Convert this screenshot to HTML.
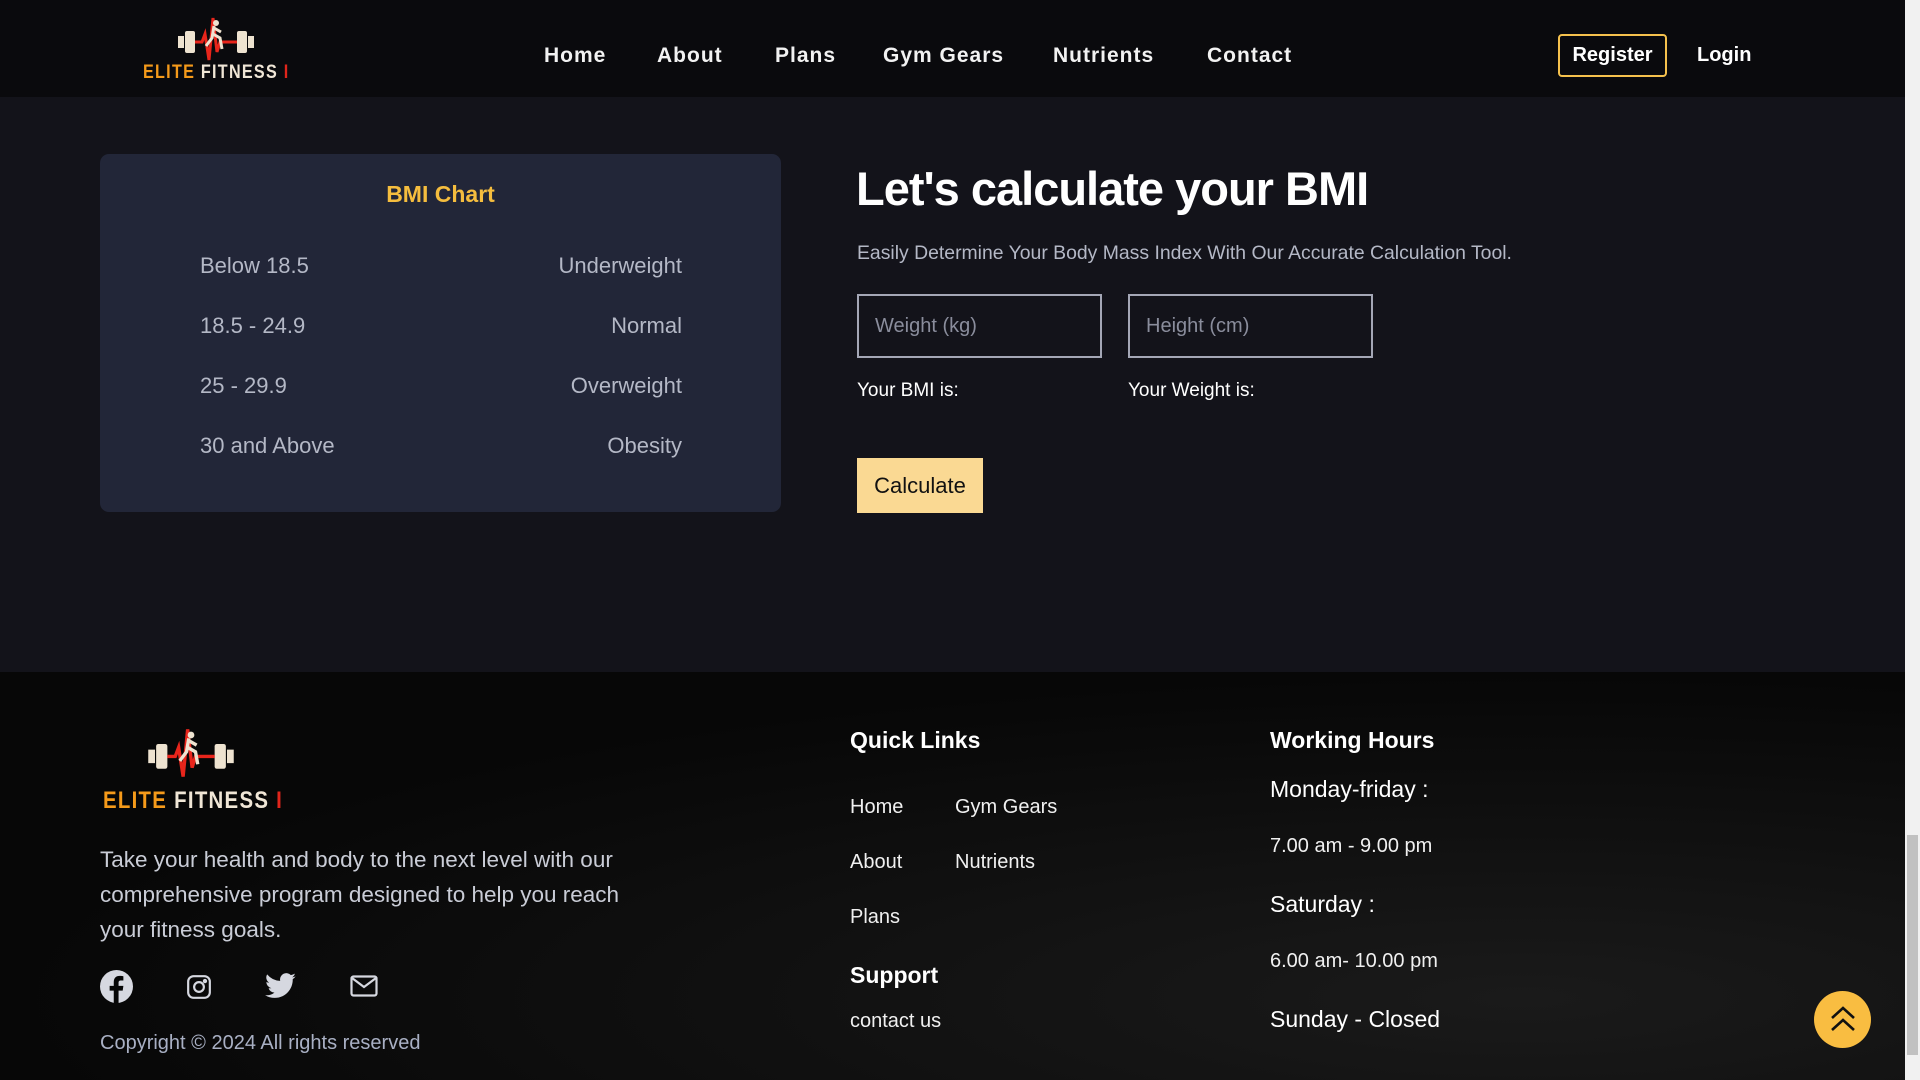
<!DOCTYPE html>
<html><head><meta charset="utf-8"><style>
*{margin:0;padding:0;box-sizing:border-box}
body{width:1920px;height:1080px;overflow:hidden;background:#13131a;font-family:"Liberation Sans",sans-serif;color:#fff;position:relative}
.a{position:absolute;white-space:nowrap}
nav{position:absolute;left:0;top:0;width:1905px;height:97px;background:#0a0a0d}
.nl{font-size:21px;font-weight:bold;letter-spacing:1px;top:44px;color:#f2f2f2}
.card{position:absolute;left:100px;top:154px;width:681px;height:358px;background:#222638;border-radius:9px}
.row{font-size:22px;color:#b4b8c6}
input{position:absolute;background:transparent;border:2px solid #a4a7b6;width:245px;height:64px;top:294px;font-size:20px;color:#8a8d9c;padding-left:16px;font-family:"Liberation Sans",sans-serif}
footer{position:absolute;left:0;top:672px;width:1905px;height:408px;background:radial-gradient(ellipse at 80% 80%,#1a1a1a,#070707 70%)}
.fl{font-size:20px;color:#f0f0f0}
.fh{font-size:23px;font-weight:bold}
.sb{position:absolute;right:0;top:0;width:15px;height:1080px;background:#f1f1f1}
.logo{font-weight:bold;letter-spacing:1.5px;transform:scaleX(.85);transform-origin:left}
</style></head><body>
<nav>
<svg class="a" style="left:176px;top:16px" width="80" height="46" viewBox="0 0 80 46"><rect x="2" y="20" width="6" height="12" fill="#eee3d0"/><rect x="9" y="15" width="10" height="22" rx="2" fill="#eee3d0"/><rect x="61" y="15" width="10" height="22" rx="2" fill="#eee3d0"/><rect x="72" y="20" width="6" height="12" fill="#eee3d0"/><polyline points="19,26 26,26 29,18 33,44 37,2 41,36 44,26 61,26" fill="none" stroke="#e8251b" stroke-width="3"/><circle cx="40" cy="7" r="3" fill="#eee3d0"/><path d="M38 10 L36 22 L30 30 M37 18 L44 22 L46 33 M38 12 L45 16" stroke="#eee3d0" stroke-width="3" fill="none"/></svg>
<div class="a logo" style="left:143px;top:62px;font-size:19px"><span style="color:#f59a1a">ELITE</span> <span style="color:#f0e6d6">FITNESS</span> <span style="color:#e0251b">I</span></div>
<div class="a nl" style="left:544px">Home</div>
<div class="a nl" style="left:657px">About</div>
<div class="a nl" style="left:775px">Plans</div>
<div class="a nl" style="left:883px">Gym Gears</div>
<div class="a nl" style="left:1053px">Nutrients</div>
<div class="a nl" style="left:1207px">Contact</div>
<div class="a" style="left:1558px;top:34px;width:109px;height:43px;border:2px solid #f5c14d;border-radius:4px;text-align:center;line-height:39px;font-size:20px;font-weight:bold">Register</div>
<div class="a" style="left:1697px;top:44px;font-size:20px;font-weight:bold">Login</div>
</nav>
<div class="card">
<div class="a" style="left:0;width:681px;text-align:center;top:27px;font-size:23px;font-weight:bold;color:#f5bd3e">BMI Chart</div>
<div class="a row" style="left:100px;top:99px">Below 18.5</div><div class="a row" style="right:99px;top:99px">Underweight</div>
<div class="a row" style="left:100px;top:159px">18.5 - 24.9</div><div class="a row" style="right:99px;top:159px">Normal</div>
<div class="a row" style="left:100px;top:219px">25 - 29.9</div><div class="a row" style="right:99px;top:219px">Overweight</div>
<div class="a row" style="left:100px;top:279px">30 and Above</div><div class="a row" style="right:99px;top:279px">Obesity</div>
</div>
<div class="a" style="left:856px;top:161px;font-size:47px;font-weight:bold;letter-spacing:-1px">Let's calculate your BMI</div>
<div class="a" style="left:857px;top:242px;font-size:19.4px;color:#b4b8c6">Easily Determine Your Body Mass Index With Our Accurate Calculation Tool.</div>
<input style="left:857px" value="Weight (kg)">
<input style="left:1128px" value="Height (cm)">
<div class="a" style="left:857px;top:380px;font-size:19px">Your BMI is:</div>
<div class="a" style="left:1128px;top:380px;font-size:19px">Your Weight is:</div>
<div class="a" style="left:857px;top:458px;width:126px;height:55px;background:#fad993;color:#111;font-size:22px;text-align:center;line-height:55px">Calculate</div>
<footer>
<svg class="a" style="left:146px;top:54px" width="90" height="54" viewBox="0 0 80 46"><rect x="2" y="20" width="6" height="12" fill="#eee3d0"/><rect x="9" y="15" width="10" height="22" rx="2" fill="#eee3d0"/><rect x="61" y="15" width="10" height="22" rx="2" fill="#eee3d0"/><rect x="72" y="20" width="6" height="12" fill="#eee3d0"/><polyline points="19,26 26,26 29,18 33,44 37,2 41,36 44,26 61,26" fill="none" stroke="#e8251b" stroke-width="3"/><circle cx="40" cy="7" r="3" fill="#eee3d0"/><path d="M38 10 L36 22 L30 30 M37 18 L44 22 L46 33 M38 12 L45 16" stroke="#eee3d0" stroke-width="3" fill="none"/></svg>
<div class="a logo" style="left:103px;top:115px;font-size:24px"><span style="color:#f59a1a">ELITE</span> <span style="color:#f0e6d6">FITNESS</span> <span style="color:#e0251b">I</span></div>
<div class="a" style="left:100px;top:170px;font-size:22.5px;line-height:35px;color:#c9ccd6;white-space:normal;width:540px">Take your health and body to the next level with our comprehensive program designed to help you reach your fitness goals.</div>
<svg class="a" style="left:100px;top:298px" width="33" height="33" viewBox="0 0 24 24"><circle cx="12" cy="12" r="12" fill="#d6d8e0"/><path d="M13.5 24V15h3l.5-3.5h-3.5V9.3c0-1 .3-1.7 1.8-1.7H17V4.5c-.4 0-1.4-.2-2.7-.2-2.7 0-4.3 1.6-4.300 4.6v2.6H7V15h3v9z" fill="#070707"/></svg>
<svg class="a" style="left:186px;top:302px" width="26" height="26" viewBox="0 0 24 24" fill="none" stroke="#d6d8e0" stroke-width="2"><rect x="2" y="2" width="20" height="20" rx="5"/><circle cx="12" cy="12" r="4.5"/><circle cx="17.5" cy="6.5" r="1" fill="#d6d8e0"/></svg>
<svg class="a" style="left:265px;top:300px" width="32" height="30" viewBox="0 0 24 22"><path d="M23 3a9.5 9.5 0 0 1-2.7.8A4.7 4.7 0 0 0 22.4 1a9.4 9.4 0 0 1-3 1.1A4.7 4.7 0 0 0 11.4 6.4 13.4 13.4 0 0 1 1.6 1.5a4.7 4.7 0 0 0 1.5 6.3 4.7 4.7 0 0 1-2.1-.6 4.7 4.7 0 0 0 3.8 4.6 4.7 4.7 0 0 1-2.1.1 4.7 4.7 0 0 0 4.4 3.3A9.5 9.5 0 0 1 0 17.1 13.4 13.4 0 0 0 7.3 19.2c8.7 0 13.5-7.2 13.5-13.5v-.6A9.6 9.6 0 0 0 23 3z" fill="#d6d8e0"/></svg>
<svg class="a" style="left:350px;top:303px" width="28" height="22" viewBox="0 0 28 22" fill="none" stroke="#d6d8e0" stroke-width="2.2"><rect x="1.5" y="1.5" width="25" height="19" rx="2"/><path d="M2 3l12 9 12-9"/></svg>
<div class="a" style="left:100px;top:360px;font-size:20px;color:#a9b0c4">Copyright © 2024 All rights reserved</div>
<div class="a fh" style="left:850px;top:55px">Quick Links</div>
<div class="a fl" style="left:850px;top:124px">Home</div><div class="a fl" style="left:955px;top:124px">Gym Gears</div>
<div class="a fl" style="left:850px;top:179px">About</div><div class="a fl" style="left:955px;top:179px">Nutrients</div>
<div class="a fl" style="left:850px;top:234px">Plans</div>
<div class="a fh" style="left:850px;top:290px">Support</div>
<div class="a fl" style="left:850px;top:338px">contact us</div>
<div class="a fh" style="left:1270px;top:55px">Working Hours</div>
<div class="a" style="left:1270px;top:104px;font-size:23px">Monday-friday :</div>
<div class="a fl" style="left:1270px;top:163px">7.00 am - 9.00 pm</div>
<div class="a" style="left:1270px;top:219px;font-size:23px">Saturday :</div>
<div class="a fl" style="left:1270px;top:278px">6.00 am- 10.00 pm</div>
<div class="a" style="left:1270px;top:334px;font-size:23px">Sunday - Closed</div>
</footer>
<div class="a" style="left:1814px;top:991px;width:57px;height:57px;border-radius:50%;background:#f9bd41"></div>
<svg class="a" style="left:1829px;top:1004px" width="28" height="30" viewBox="0 0 28 30" fill="none" stroke="#111" stroke-width="2.6"><path d="M3 14L14 4 25 14M3 26L14 16 25 26"/></svg>
<div class="sb"><div style="position:absolute;left:2px;top:835px;width:11px;height:220px;background:#c1c1c1"></div></div>
</body></html>
